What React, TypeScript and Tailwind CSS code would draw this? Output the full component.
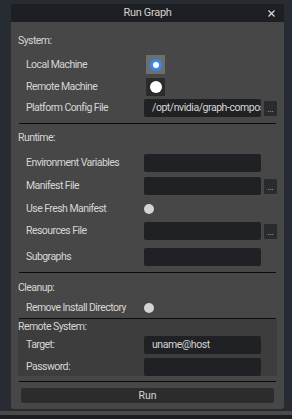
import React from "react";

const font = { fontFamily: "Roboto, 'Noto Sans', sans-serif" };

function Label({ children }: { children: React.ReactNode }) {
  return <div className="w-[126px] shrink-0 pl-[8px] text-[10.5px] leading-[12px] text-[#d6d6d6] tracking-[-0.55px] whitespace-nowrap">{children}</div>;
}

function Input({ value, browse }: { value?: string; browse?: boolean }) {
  return (
    <div className="flex items-center">
      <div className="w-[117px] h-[18px] bg-[#202124] rounded-[2px] overflow-hidden flex items-center pl-[8px] text-[10.5px] tracking-[-0.45px] text-[#d6d6d6] whitespace-nowrap">
        {value}
      </div>
      {browse && (
        <div className="ml-[3px] w-[13px] h-[15px] bg-[#2a2b2d] rounded-[1px] flex items-center justify-center pt-[3px] text-[8px] leading-[8px] text-[#cfcfcf]">
          ...
        </div>
      )}
    </div>
  );
}

function Row({ label, children, className = "" }: { label: string; children?: React.ReactNode; className?: string }) {
  return (
    <div className={"flex items-center h-[18px] " + className}>
      <Label>{label}</Label>
      {children}
    </div>
  );
}

function Dot() {
  return <div className="w-[10px] h-[10px] rounded-full bg-[#d4d4d4]" />;
}

function Sep({ className = "" }: { className?: string }) {
  return <div className={"h-px bg-[#0c0c0c] mx-[1px] " + className} />;
}

function Header({ children, className = "" }: { children: React.ReactNode; className?: string }) {
  return <div className={"h-[12px] text-[10.5px] leading-[12px] text-[#d6d6d6] tracking-[-0.55px] " + className}>{children}</div>;
}

export default function App() {
  return (
    <div className="w-[292px] h-[419px] bg-[#262c31] relative overflow-hidden" style={font}>
      <div className="flex flex-col h-full">
        <div className="pt-[4px] px-[11px] flex-1">
          <div className="w-[273px] h-[405px] bg-[#474747] rounded-b-[3px] flex flex-col">
            <div className="h-[18px] bg-[#1e1f22] flex items-center justify-center relative text-[11px] tracking-[-0.3px] text-[#d2d2d2]">
              Run Graph
              <svg className="absolute right-[9px] top-[6px]" width="7" height="7" viewBox="0 0 7 7">
                <path d="M0.5 0.5 L6.5 6.5 M6.5 0.5 L0.5 6.5" stroke="#dcdcdc" strokeWidth="1.2" />
              </svg>
            </div>
            <div className="px-[7px] flex flex-col">
              <Header className="mt-[13px]">System:</Header>
              <div className="flex items-center h-[19px] mt-[8px]">
                <Label>Local Machine</Label>
                <div className="ml-[2px] w-[19px] h-[19px] bg-[#6a6f70] flex items-center justify-center">
                  <div className="w-[12px] h-[12px] rounded-full bg-[#3d86f0] flex items-center justify-center">
                    <div className="w-[6px] h-[6px] rounded-full bg-white" />
                  </div>
                </div>
              </div>
              <div className="flex items-center h-[18px] mt-[4px]">
                <Label>Remote Machine</Label>
                <div className="ml-[2px] w-[19px] h-[18px] bg-[#2b2b2b] flex items-center justify-center">
                  <div className="w-[12px] h-[12px] rounded-full bg-white" />
                </div>
              </div>
              <Row label="Platform Config File" className="mt-[3px]">
                <Input value="/opt/nvidia/graph-compose" browse />
              </Row>
              <Sep className="mt-[6px]" />
              <Header className="mt-[8px]">Runtime:</Header>
              <Row label="Environment Variables" className="mt-[10px]">
                <Input />
              </Row>
              <Row label="Manifest File" className="mt-[5px]">
                <Input browse />
              </Row>
              <Row label="Use Fresh Manifest" className="mt-[5px]">
                <Dot />
              </Row>
              <Row label="Resources File" className="mt-[4px]">
                <Input browse />
              </Row>
              <Row label="Subgraphs" className="mt-[8px]">
                <Input />
              </Row>
              <Sep className="mt-[6px]" />
              <Header className="mt-[9px]">Cleanup:</Header>
              <Row label="Remove Install Directory" className="mt-[5px]">
                <Dot />
              </Row>
              <Sep className="mt-[1px]" />
              <div className="bg-[#3d3d3d] h-[57px] flex flex-col">
                <Header className="mt-[2px]">Remote System:</Header>
                <Row label="Target:" className="mt-[3px]">
                  <Input value="uname@host" />
                </Row>
                <Row label="Password:" className="mt-[4px]">
                  <Input />
                </Row>
              </div>
              <Sep className="mt-[5px]" />
              <div className="mt-[6px] mx-[3px] h-[15px] bg-[#2c2c2c] rounded-[2px] flex items-center justify-center text-[10.5px] text-[#d6d6d6]">
                Run
              </div>
            </div>
          </div>
        </div>
        <div className="h-[2px] bg-[#262c31]" />
        <div className="h-[4px] bg-[#4a4a4a]" />
        <div className="h-[4px] bg-[#1c1e21]" />
      </div>
    </div>
  );
}
